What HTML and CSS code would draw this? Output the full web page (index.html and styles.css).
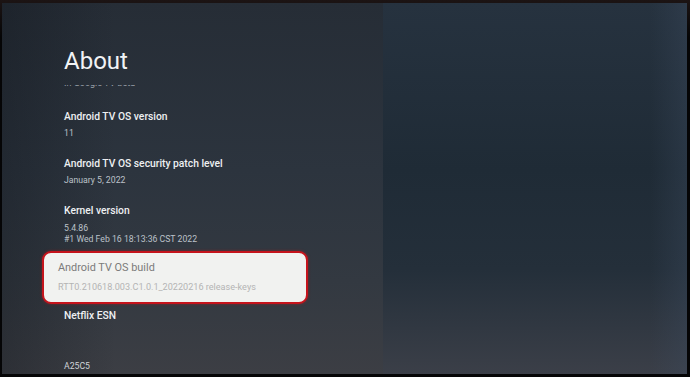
FILE: index.html
```html
<!DOCTYPE html>
<html>
    <head>
        <meta charset="UTF-8">
        <title>About</title>
        <link rel="stylesheet" href="styles.css">
    </head>
    <body>
        <div class="screen">

            <div class="menu">
                <h1 class="menu_title">About</h1>

                <div class="clipped">
                    <span>In Google TV beta</span>
                </div>

                <ul class="info">
                    <li>
                        <p class="name">Android TV OS version</p>
                        <p class="value">11</p>
                    </li>
                    <li>
                        <p class="name">Android TV OS security patch level</p>
                        <p class="value">January 5, 2022</p>
                    </li>
                    <li class="kernel">
                        <p class="name">Kernel version</p>
                        <p class="value">5.4.86</p>
                        <p class="value">#1 Wed Feb 16 18:13:36 CST 2022</p>
                    </li>
                    <li class="focused">
                        <p class="name">Android TV OS build</p>
                        <p class="value">RTT0.210618.003.C1.0.1_20220216 release-keys</p>
                    </li>
                    <li class="netflix">
                        <p class="name">Netflix ESN</p>
                    </li>
                    <li class="last">
                        <p class="value">A25C5</p>
                    </li>
                </ul>
            </div>

            <div class="preview"></div>

        </div>
    </body>
</html>
```

FILE: styles.css
```css
html,body{
    margin: 0;
    padding: 0;
    background: #000;
}
.screen{
    width: 690px;
    height: 377px;
    box-sizing: border-box;
    padding: 3px 3px 3px 2px;
    background: linear-gradient(#1c1414, #050506 10%, #050506);
    display: flex;
    overflow: hidden;
    font-family: Roboto, "Noto Sans", sans-serif;
}
.menu{
    width: 381px;
    flex: none;
    box-sizing: border-box;
    padding: 44px 0 0 62px;
    background:
        linear-gradient(90deg, rgba(10,14,20,0.3), rgba(10,14,20,0) 30%),
        linear-gradient(#262d36, #2c343e 45%, #333941 75%, #3c3e44);
}
.preview{
    flex: 1;
    background:
        linear-gradient(90deg, rgba(0,0,0,0) 88%, rgba(60,75,95,0.35)),
        linear-gradient(#26323f, #1f2b36 45%, #242f3a 72%, #3b3f48);
}
.menu_title{
    margin: 0;
    font-size: 24px;
    line-height: 28px;
    font-weight: 400;
    color: #f1f3f5;
}
.clipped{
    margin-top: 10px;
    height: 5px;
    overflow: hidden;
}
.clipped span{
    display: block;
    margin-top: -7px;
    font-size: 9px;
    line-height: 11px;
    color: #9aa1aa;
}
.info{
    list-style: none;
    margin: 19px 0 0 0;
    padding: 0;
}
.info li{
    margin-bottom: 17px;
}
.info p{
    margin: 0;
}
.name{
    font-size: 10.3px;
    line-height: 16px;
    font-weight: 500;
    color: #eef0f2;
}
.value{
    font-size: 8.7px;
    line-height: 11px;
    color: #bcc2c9;
}
.name + .value{
    margin-top: 3px;
}
.kernel{
    margin-bottom: 6px !important;
}
.kernel .name + .value{
    margin-top: 4px;
}
.focused{
    margin-left: -22px;
    width: 266px;
    box-sizing: border-box;
    padding: 6px 14px 9px;
    background: #f1f2f0;
    border: 2px solid #c5141c;
    border-radius: 9px;
    box-shadow: 0 0 3px rgba(200,20,28,0.5);
    margin-bottom: 4px !important;
}
.focused .name{
    font-size: 10.9px;
    line-height: 17px;
    font-weight: 400;
    color: #7b7b7b;
}
.focused .value{
    margin-top: 5px;
    font-size: 9.1px;
    line-height: 12px;
    color: #b4b4b4;
}
.netflix{
    margin-bottom: 37px !important;
}
.last .value{
    color: #d0d4d8;
}
```
